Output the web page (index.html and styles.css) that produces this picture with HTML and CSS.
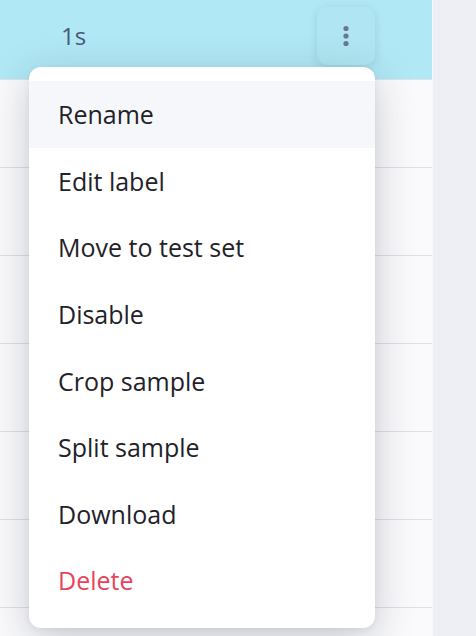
FILE: index.html
```html
<!DOCTYPE html>
<html lang="en">
<head>
<meta charset="utf-8">
<title>Sample menu</title>
<link rel="stylesheet" href="styles.css">
</head>
<body>
<div class="page">
  <div class="main">
    <div class="row row-active">
      <span class="duration">1s</span>
      <button class="more-btn" aria-label="More">
        <svg width="8" height="22" viewBox="0 0 8 22"><circle cx="4" cy="3.5" r="2.6"/><circle cx="4" cy="11" r="2.6"/><circle cx="4" cy="18.5" r="2.6"/></svg>
      </button>
    </div>
    <div class="row"></div>
    <div class="row"></div>
    <div class="row"></div>
    <div class="row"></div>
    <div class="row"></div>
    <div class="row"></div>
    <div class="row"></div>

    <ul class="menu">
      <li class="menu-item hover">Rename</li>
      <li class="menu-item">Edit label</li>
      <li class="menu-item">Move to test set</li>
      <li class="menu-item">Disable</li>
      <li class="menu-item">Crop sample</li>
      <li class="menu-item">Split sample</li>
      <li class="menu-item">Download</li>
      <li class="menu-item danger">Delete</li>
    </ul>
  </div>
  <div class="side"></div>
</div>
</body>
</html>
```

FILE: styles.css
```css
* { box-sizing: border-box; }
html, body { margin: 0; padding: 0; }
body {
  font-family: "Open Sans", "Noto Sans", sans-serif;
  background: #ffffff;
  overflow: hidden;
}
.page {
  display: flex;
  height: 636px;
}
.main {
  position: relative;
  width: 433px;
  background: #fafafc;
  border-right: 1px solid #f8f8fb;
  overflow: hidden;
}
.side {
  flex: 1;
  background: #eeeff4;
}
.row {
  height: 88px;
  border-bottom: 1px solid #dedee6;
}
.row-active {
  height: 80px;
  background: #b1e8f5;
  border-bottom: 1px solid #dfe3ea;
  display: flex;
  align-items: flex-start;
  justify-content: space-between;
  padding: 7px 57px 0 61px;
}
.duration {
  height: 58px;
  line-height: 58px;
  font-size: 24px;
  color: #4b5878;
}
.more-btn {
  width: 58px;
  height: 58px;
  border: 0;
  border-radius: 10px;
  background: #b0e6f3;
  box-shadow: 0 2px 8px rgba(40, 90, 110, 0.16);
  display: flex;
  align-items: center;
  justify-content: center;
  padding: 0;
}
.more-btn svg { fill: #6c7592; display: block; }
.menu {
  position: absolute;
  left: 29px;
  top: 67px;
  width: 346px;
  margin: 0;
  padding: 14px 0;
  list-style: none;
  background: #ffffff;
  border-radius: 12px;
  box-shadow: 0 10px 40px rgba(25, 30, 55, 0.22), 0 2px 6px rgba(25, 30, 55, 0.06);
}
.menu-item {
  height: 66.6px;
  display: flex;
  align-items: center;
  padding-left: 29px;
  font-size: 25px;
  color: #1f2228;
}
.menu-item.hover { background: #f6f7fb; }
.menu-item.danger { color: #e6455c; }
```
